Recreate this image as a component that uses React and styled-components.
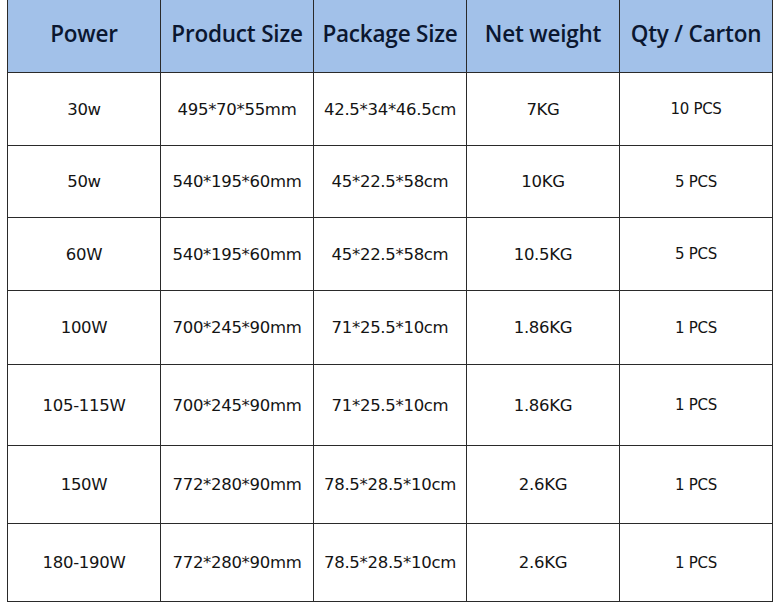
import React from "react"
import styled, { createGlobalStyle } from "styled-components"

const GlobalStyle = createGlobalStyle`
  html, body {
    margin: 0;
    padding: 0;
    background: #ffffff;
  }
`

const Page = styled.div`
  padding: 0 7px;
  overflow: hidden;
  height: 603px;
`

const SpecTable = styled.table`
  width: 766px;
  margin-top: -2px;
  border-collapse: collapse;
  table-layout: fixed;
`

const HeadCell = styled.th`
  height: 69px;
  padding: 0 0 4px;
  background: #a2c1e9;
  border: 1px solid #2a2a2a;
  color: #0b1730;
  font-family: "Open Sans", "Noto Sans", sans-serif;
  font-weight: 600;
  font-size: 22.5px;
  letter-spacing: -0.2px;
  text-align: center;
  vertical-align: middle;
  white-space: nowrap;
`

const Cell = styled.td`
  height: ${p => p.$h}px;
  padding: 0;
  border: 1px solid #2a2a2a;
  color: #141414;
  font-family: "DejaVu Sans", Verdana, sans-serif;
  font-size: ${p => (p.$small ? 15 : 16.5)}px;
  letter-spacing: -0.3px;
  text-align: center;
  vertical-align: middle;
  white-space: nowrap;
`

const columns = ["Power", "Product Size", "Package Size", "Net weight", "Qty / Carton"]

const rows = [
  { h: 72, cells: ["30w", "495*70*55mm", "42.5*34*46.5cm", "7KG", "10 PCS"] },
  { h: 71, cells: ["50w", "540*195*60mm", "45*22.5*58cm", "10KG", "5 PCS"] },
  { h: 72, cells: ["60W", "540*195*60mm", "45*22.5*58cm", "10.5KG", "5 PCS"] },
  { h: 73, cells: ["100W", "700*245*90mm", "71*25.5*10cm", "1.86KG", "1 PCS"] },
  { h: 80, cells: ["105-115W", "700*245*90mm", "71*25.5*10cm", "1.86KG", "1 PCS"] },
  { h: 77, cells: ["150W", "772*280*90mm", "78.5*28.5*10cm", "2.6KG", "1 PCS"] },
  { h: 77, cells: ["180-190W", "772*280*90mm", "78.5*28.5*10cm", "2.6KG", "1 PCS"] },
]

const App = () => {
  return (
    <Page>
      <GlobalStyle />
      <SpecTable>
        <thead>
          <tr>
            {columns.map(c => (
              <HeadCell key={c}>{c}</HeadCell>
            ))}
          </tr>
        </thead>
        <tbody>
          {rows.map((r, i) => (
            <tr key={i}>
              {r.cells.map((c, j) => (
                <Cell key={j} $h={r.h} $small={j === 4}>
                  {c}
                </Cell>
              ))}
            </tr>
          ))}
        </tbody>
      </SpecTable>
    </Page>
  )
}

export default App
